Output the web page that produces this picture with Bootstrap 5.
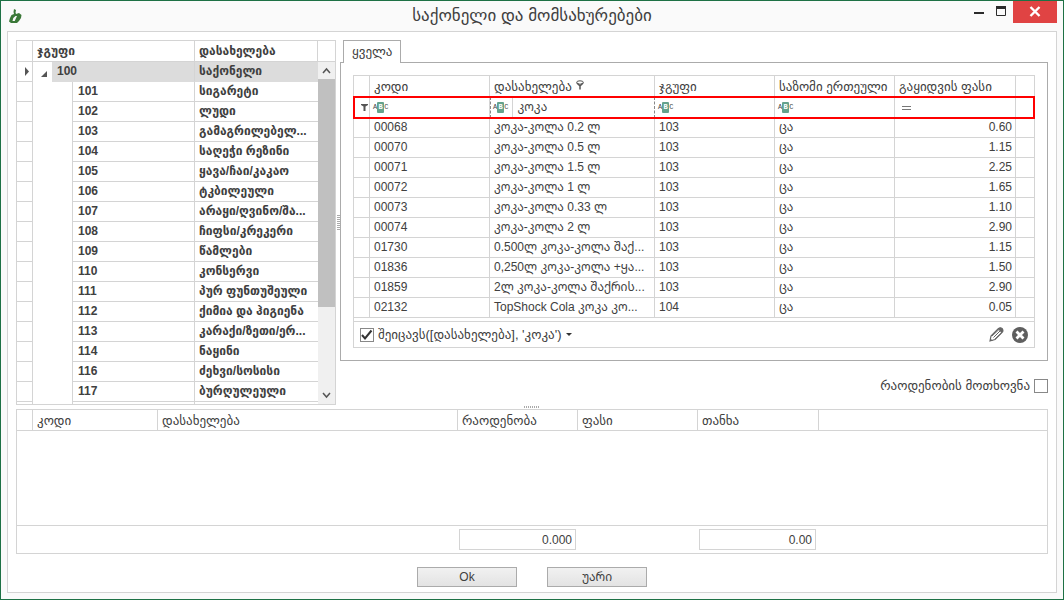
<!DOCTYPE html>
<html lang="ka">
<head>
<meta charset="utf-8">
<meta name="viewport" content="width=device-width, initial-scale=1">
<title>საქონელი და მომსახურებები</title>
<link href="https://cdn.jsdelivr.net/npm/bootstrap@5.3.0/dist/css/bootstrap.min.css" rel="stylesheet">
<style>
:root{--line:#d4d4d4;--edge:#ababab;--ink:#404040}
body{font:12px/19px "Liberation Sans","Noto Sans Georgian","DejaVu Sans",sans-serif;color:var(--ink);background:#fafafa}
.win{border:1px solid #1e7145;min-height:100vh}
.titlebar{height:30px}
.titlebar h1{font-size:17px;line-height:30px}
.titlebar h1,.geo,.gridtable thead th{font-family:"Liberation Sans","DejaVu Sans",sans-serif}
.geo,.gridtable thead th{font-size:13px}
.win-btn{border:0;background:none;padding:0;height:22px;width:22px}
.win-close{width:44px;background:#e04343}
.win-btns{margin-right:6px}
.panel{margin:0 6px 6px;padding:8px 8px 5px;background:#fff;border:1px solid var(--line)}
.gridtable{width:100%;table-layout:fixed;border-collapse:separate;border-spacing:0;margin:0}
.gridtable td,.gridtable th{height:20px;padding:0 4px;border-right:1px solid var(--line);border-bottom:1px solid var(--line);white-space:nowrap;overflow:hidden;text-overflow:ellipsis;line-height:19px;font-weight:inherit}
.gridtable thead th{height:21px}
.gridtable td.text-end{padding-right:3px}
.framed{border:1px solid var(--line)}
.gridtable .end{border-right:0}
.tree-side{flex:0 0 320px}
.gridtable.tree,.gridtable.tree thead th{font:bold 12px/19px "Liberation Sans","DejaVu Sans",sans-serif}
.tree .indent{border-bottom:0;border-right:0}
.tree .step{border-bottom:0}
.tree td.code{padding-left:5px}
.tree .chosen{background:#dcdcdc;border-bottom-color:#dcdcdc}
.gridtable.tree .peek td{height:2px;line-height:1px;border-bottom:0}
.gridtable.tree .scrollcell{padding:0;border:0;vertical-align:top}
.tree td.nm{border-right:0}
.scrollbar{background:#f0f0f0;height:342px}
.thumb{background:#c0c0c0;height:228px}
.sb-btn{height:17px}
.splitter-v{flex:0 0 4px}
.splitter-v i{width:3px;height:16px;background:repeating-linear-gradient(#aaa 0 1px,#fff 1px 2px)}
.splitter-h{height:4px}
.splitter-h i{width:16px;height:2px;background:repeating-linear-gradient(90deg,#aaa 0 1px,#fff 1px 2px)}
.tabhead{margin-left:3px;margin-bottom:-1px;border:1px solid var(--edge);border-bottom:0;background:#fff;color:var(--ink);padding:0 8px;height:23px;line-height:22px;position:relative}
.tabbody{border:1px solid var(--edge);padding:12px}
.filter-row{outline:2px solid #f00;outline-offset:-1px}
.gridtable .filter-row td{padding:0 3px;border-bottom:0;height:21px}
.abc{display:flex;align-items:center;font:7px/9px "Liberation Mono",monospace;color:#444}
.abc b{background:#64a28c;color:#fff;width:7px;height:11px;line-height:11px;text-align:center;border-radius:1px}
.gridtable .filter-row td.editing{padding:0 0 0 2px;border-right:1px dashed #888;border-left:1px dashed #888;border-bottom:1px dashed #888}
.filter-input{border:0;border-left:1px solid var(--line);padding:0 4px;height:19px;min-width:0;outline:0;color:var(--ink);background:none}
.filter-foot{border-top:1px solid var(--line);margin-top:3px;height:26px;padding:0 6px}
.tick{appearance:none;width:14px;height:14px;margin:0;border:1px solid #888;background:#fff;flex:none}
.tick:checked{background:#fff url("data:image/svg+xml,%3Csvg xmlns='http://www.w3.org/2000/svg' viewBox='0 0 12 12'%3E%3Cpath d='M1 6l3 3.500L10.500 1.500' fill='none' stroke='%23333' stroke-width='2'/%3E%3C/svg%3E")}
.plain{border:0;background:none;padding:0;color:var(--ink)}
.ask{height:44px;padding-top:5px}
.totals{height:28px;border-top:1px solid var(--line)}
.basket-body{height:94px}
.totals-table td{border:0;height:27px;padding:0 2px 0 1px}
.total-box{width:100%;height:21px;border:1px solid var(--line);text-align:right;padding:0 3px;color:var(--ink);display:block}
.actions{gap:30px;padding-top:13px}
.cmd{width:100px;height:20px;border:1px solid var(--edge);padding:0;background:linear-gradient(#f1f1f1,#e3e3e3);color:var(--ink);line-height:18px}
</style>
</head>
<body>
<main class="win d-flex flex-column">
<header class="titlebar d-flex justify-content-between align-items-start position-relative">
  <svg class="mt-2 ms-2" width="13" height="15" viewBox="0 0 13 15"><path fill="#3b7838" fill-rule="evenodd" d="M5 0l2 1-.500 2.500L7 5l3-1 2.500 2-.500 3-2 3-2 2H2L0 12.500 1 9l1.500-3L5 5 4.500 3zM6.500 7L4.300 9 3.500 12h2.200L8 7z"/></svg>
  <h1 class="m-0 position-absolute start-0 end-0 text-center fw-normal pe-none">საქონელი და მომსახურებები</h1>
  <div class="d-flex position-relative win-btns">
    <button class="win-btn" aria-label="Minimize"><svg class="d-block" width="22" height="22"><path d="M5 12h10" stroke="#2b2b2b" stroke-width="2"/></svg></button>
    <button class="win-btn" aria-label="Maximize"><svg class="d-block" width="22" height="22"><path d="M5.500 5.500h9v9h-9z" fill="none" stroke="#2b2b2b"/><path d="M5 6.500h10" stroke="#2b2b2b" stroke-width="3"/></svg></button>
    <button class="win-btn win-close" aria-label="Close"><svg class="d-block mx-auto" width="44" height="22"><path d="M17.500 6l9 9M26.500 6l-9 9" stroke="#fff" stroke-width="2.400"/></svg></button>
  </div>
</header>

<section class="panel flex-grow-1">
  <div class="d-flex align-items-start">
    <div class="tree-side framed">
      <table class="gridtable tree">
        <colgroup><col style="width:16px"><col style="width:19px"><col style="width:21px"><col style="width:122px"><col><col style="width:17px"></colgroup>
        <thead><tr><th></th><th colspan="3">ჯგუფი</th><th>დასახელება</th><th class="end"></th></tr></thead>
        <tbody>
        <tr><td><svg class="d-block ms-1" width="5" height="9"><path d="M0 0l4 4.500L0 9z" fill="#555"/></svg></td><td class="indent"><svg class="d-block mt-1 ms-1" width="7" height="7"><path d="M6 0v6H0z" fill="#555"/></svg></td><td colspan="2" class="chosen code">100</td><td class="chosen nm">საქონელი</td>
          <td rowspan="18" class="scrollcell"><div class="scrollbar d-flex flex-column"><div class="sb-btn"><svg class="d-block" width="17" height="17"><path d="M5 11l3.500-4L12 11" fill="none" stroke="#555" stroke-width="1.500"/></svg></div><div class="thumb"></div><div class="sb-btn mt-auto"><svg class="d-block" width="17" height="17"><path d="M5 6l3.500 4L12 6" fill="none" stroke="#555" stroke-width="1.500"/></svg></div></div></td></tr>
        <tr><td></td><td class="indent"></td><td class="step"></td><td class="code">101</td><td class="nm">სიგარეტი</td></tr>
        <tr><td></td><td class="indent"></td><td class="step"></td><td class="code">102</td><td class="nm">ლუდი</td></tr>
        <tr><td></td><td class="indent"></td><td class="step"></td><td class="code">103</td><td class="nm">გამაგრილებელ...</td></tr>
        <tr><td></td><td class="indent"></td><td class="step"></td><td class="code">104</td><td class="nm">საღეჭი რეზინი</td></tr>
        <tr><td></td><td class="indent"></td><td class="step"></td><td class="code">105</td><td class="nm">ყავა/ჩაი/კაკაო</td></tr>
        <tr><td></td><td class="indent"></td><td class="step"></td><td class="code">106</td><td class="nm">ტკბილეული</td></tr>
        <tr><td></td><td class="indent"></td><td class="step"></td><td class="code">107</td><td class="nm">არაყი/ღვინო/შა...</td></tr>
        <tr><td></td><td class="indent"></td><td class="step"></td><td class="code">108</td><td class="nm">ჩიფსი/კრეკერი</td></tr>
        <tr><td></td><td class="indent"></td><td class="step"></td><td class="code">109</td><td class="nm">წამლები</td></tr>
        <tr><td></td><td class="indent"></td><td class="step"></td><td class="code">110</td><td class="nm">კონსერვი</td></tr>
        <tr><td></td><td class="indent"></td><td class="step"></td><td class="code">111</td><td class="nm">პურ ფუნთუშეული</td></tr>
        <tr><td></td><td class="indent"></td><td class="step"></td><td class="code">112</td><td class="nm">ქიმია და ჰიგიენა</td></tr>
        <tr><td></td><td class="indent"></td><td class="step"></td><td class="code">113</td><td class="nm">კარაქი/ზეთი/ერ...</td></tr>
        <tr><td></td><td class="indent"></td><td class="step"></td><td class="code">114</td><td class="nm">ნაყინი</td></tr>
        <tr><td></td><td class="indent"></td><td class="step"></td><td class="code">116</td><td class="nm">ძეხვი/სოსისი</td></tr>
        <tr><td></td><td class="indent"></td><td class="step"></td><td class="code">117</td><td class="nm">ბურღულეული</td></tr>
        <tr class="peek"><td></td><td class="indent"></td><td class="step"></td><td></td><td class="nm"></td></tr>
        </tbody>
      </table>
    </div>
    <div class="splitter-v align-self-center d-flex justify-content-center"><i></i></div>
    <div class="flex-grow-1" style="min-width:0">
      <button class="tabhead geo d-block" role="tab" aria-selected="true">ყველა</button>
      <div class="tabbody">
        <div class="framed">
          <table class="gridtable">
            <colgroup><col style="width:16px"><col style="width:120px"><col><col style="width:120px"><col style="width:120px"><col style="width:121px"><col style="width:18px"></colgroup>
            <thead><tr><th></th><th>კოდი</th><th>დასახელება<svg class="ms-1 mb-1" width="8" height="10" fill="none" stroke="#555"><ellipse cx="4" cy="2.500" rx="3.400" ry="1.700"/><path d="M1 3l3 3 3-3M4 5v4.500" stroke-width="1.500"/></svg></th><th>ჯგუფი</th><th>საზომი ერთეული</th><th>გაყიდვის ფასი</th><th class="end"></th></tr></thead>
            <tbody>
            <tr class="filter-row"><td><svg class="d-block ms-1" width="7" height="7"><path d="M0 0h7v1L4.500 2.500V7h-2V2.500L0 1z" fill="#555"/></svg></td><td><span class="abc">A<b>B</b>C</span></td><td class="editing"><div class="d-flex align-items-center"><span class="abc me-1">A<b>B</b>C</span><input class="filter-input flex-grow-1" aria-label="დასახელება" value="კოკა"></div></td><td><span class="abc">A<b>B</b>C</span></td><td><span class="abc">A<b>B</b>C</span></td><td><svg class="d-block ms-1" width="9" height="5"><path d="M0 1.500h9M0 4.500h9" stroke="#777"/></svg></td><td class="end"></td></tr>
            <tr><td></td><td>00068</td><td>კოკა-კოლა 0.2 ლ</td><td>103</td><td>ცა</td><td class="text-end">0.60</td><td class="end"></td></tr>
            <tr><td></td><td>00070</td><td>კოკა-კოლა 0.5 ლ</td><td>103</td><td>ცა</td><td class="text-end">1.15</td><td class="end"></td></tr>
            <tr><td></td><td>00071</td><td>კოკა-კოლა 1.5 ლ</td><td>103</td><td>ცა</td><td class="text-end">2.25</td><td class="end"></td></tr>
            <tr><td></td><td>00072</td><td>კოკა-კოლა 1 ლ</td><td>103</td><td>ცა</td><td class="text-end">1.65</td><td class="end"></td></tr>
            <tr><td></td><td>00073</td><td>კოკა-კოლა 0.33 ლ</td><td>103</td><td>ცა</td><td class="text-end">1.10</td><td class="end"></td></tr>
            <tr><td></td><td>00074</td><td>კოკა-კოლა 2 ლ</td><td>103</td><td>ცა</td><td class="text-end">2.90</td><td class="end"></td></tr>
            <tr><td></td><td>01730</td><td>0.500ლ კოკა-კოლა შაქ...</td><td>103</td><td>ცა</td><td class="text-end">1.15</td><td class="end"></td></tr>
            <tr><td></td><td>01836</td><td>0,250ლ კოკა-კოლა +ყა...</td><td>103</td><td>ცა</td><td class="text-end">1.50</td><td class="end"></td></tr>
            <tr><td></td><td>01859</td><td>2ლ კოკა-კოლა შაქრის...</td><td>103</td><td>ცა</td><td class="text-end">2.90</td><td class="end"></td></tr>
            <tr><td></td><td>02132</td><td>TopShock Cola კოკა კო...</td><td>104</td><td>ცა</td><td class="text-end">0.05</td><td class="end"></td></tr>
            </tbody>
          </table>
          <div class="filter-foot d-flex align-items-center">
            <input class="tick" type="checkbox" checked id="useFilter" aria-label="ფილტრი">
            <button class="plain geo ms-1 d-flex align-items-center gap-1">შეიცავს([დასახელება], 'კოკა')<svg width="6" height="3"><path d="M0 0h6L3 3z" fill="#333"/></svg></button>
            <button class="plain ms-auto me-2" aria-label="Edit"><svg class="d-block" width="15" height="15" viewBox="0 0 15 15"><path d="M1 14l1-5 7.500-7.500q2-1.500 3.500 0t.500 3.500L6 12.500z" fill="#fff" stroke="#666" stroke-width="1.200"/><path d="M9 2l2-1.500L14 2v2l-1.500 2z" fill="#666"/><path d="M3 9l7-6.500M4.500 10.500L11 4M6 12l6.500-6" stroke="#666"/><path d="M1 14l.5-2.500L4 14z" fill="#666"/></svg></button>
            <button class="plain" aria-label="Clear"><svg class="d-block" width="16" height="16"><circle cx="8" cy="8" r="8" fill="#5f5f5f"/><path d="M4.500 4.500l7 7M11.500 4.500l-7 7" stroke="#fff" stroke-width="2.800"/></svg></button>
          </div>
        </div>
      </div>
      <div class="d-flex justify-content-end align-items-center ask gap-1">
        <label class="geo" for="askQty">რაოდენობის მოთხოვნა</label><input class="tick" type="checkbox" id="askQty">
      </div>
    </div>
  </div>
  <div class="splitter-h d-flex justify-content-center align-items-center"><i></i></div>
  <div class="framed">
    <table class="gridtable">
      <colgroup><col style="width:16px"><col style="width:125px"><col style="width:300px"><col style="width:120px"><col style="width:120px"><col style="width:121px"><col></colgroup>
      <thead><tr><th></th><th>კოდი</th><th>დასახელება</th><th>რაოდენობა</th><th>ფასი</th><th>თანხა</th><th class="end"></th></tr></thead>
    </table>
    <div class="basket-body"></div>
    <div class="totals">
      <table class="gridtable totals-table">
        <colgroup><col style="width:441px"><col style="width:120px"><col style="width:120px"><col style="width:120px"><col></colgroup>
        <tbody><tr><td></td><td><input class="total-box" aria-label="რაოდენობა" value="0.000" readonly></td><td></td><td><input class="total-box" aria-label="თანხა" value="0.00" readonly></td><td></td></tr></tbody>
      </table>
    </div>
  </div>
  <div class="actions d-flex justify-content-center">
    <button class="cmd">Ok</button>
    <button class="cmd">უარი</button>
  </div>
</section>
</main>
<script src="https://cdn.jsdelivr.net/npm/bootstrap@5.3.0/dist/js/bootstrap.bundle.min.js"></script>
</body>
</html>
